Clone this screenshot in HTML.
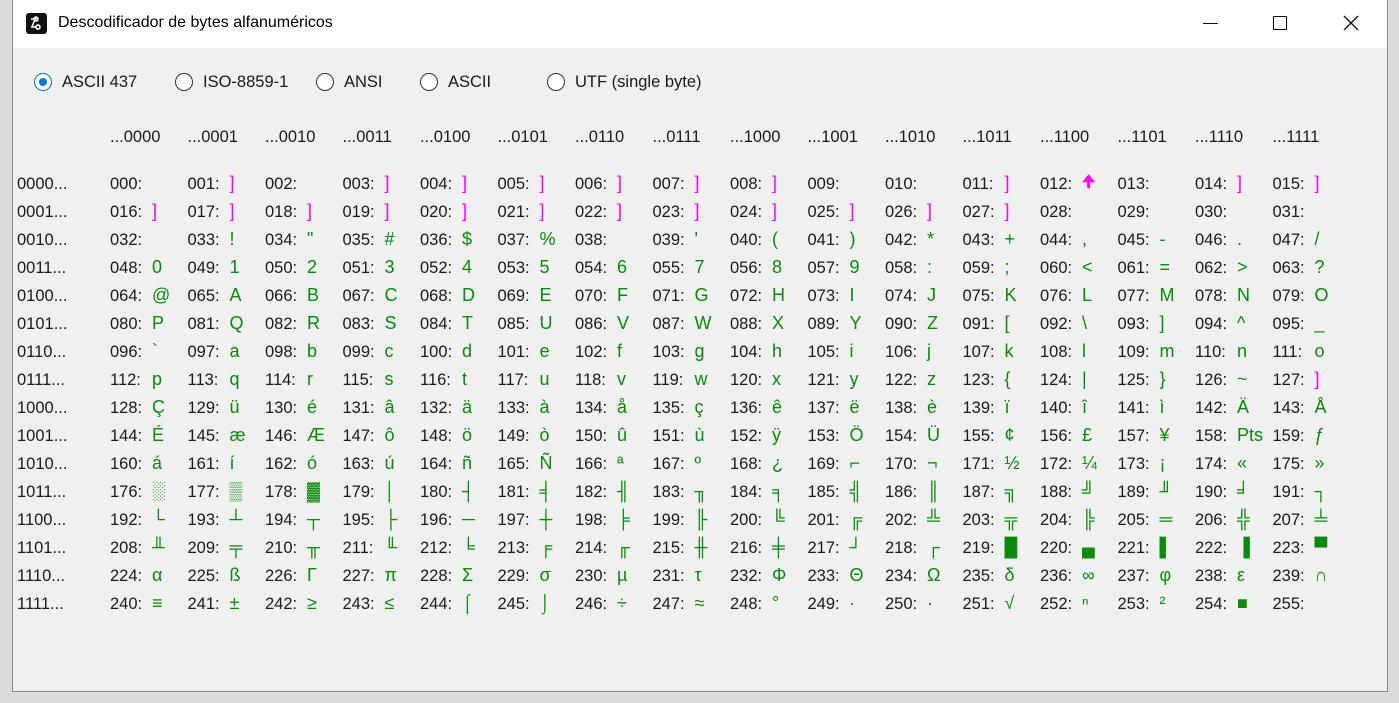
<!DOCTYPE html>
<html><head><meta charset="utf-8"><style>
*{margin:0;padding:0;box-sizing:border-box}
body{width:1399px;height:703px;background:#dcdcdc;position:relative;overflow:hidden;font-family:"Liberation Sans","DejaVu Sans",sans-serif;color:#1a1a1a}
.win{position:absolute;left:12px;top:0;width:1376px;height:692px;background:#f0f0f0;border:1px solid #8a8a8a;border-top:none}
.tb{position:absolute;left:0;top:0;width:100%;height:48px;background:#fff}
.tt{position:absolute;left:45px;top:14px;font-size:16px;color:#000}
.rad{position:absolute;top:72px;font-size:16.5px;line-height:20px}
.rad .o{position:absolute;left:0;top:1px;width:18px;height:18px;border:1.5px solid #333;border-radius:50%;background:#fff}
.rad .o.on{border-color:#0078d7}
.rad .o.on::after{content:"";position:absolute;left:3.5px;top:3.5px;width:8px;height:8px;border-radius:50%;background:#0078d7}
.rad span{position:absolute;left:28px;top:0;white-space:nowrap}
.hdr{position:absolute;top:127px;left:110px;font-size:16.5px;line-height:20px;white-space:nowrap}
.hdr span{display:inline-block;width:77.5px}
.row{position:absolute;left:5px;font-size:16.5px;line-height:20px;white-space:nowrap;height:20px}
.rl{position:absolute;left:0;top:0}
.cells{position:absolute;left:93px;top:0}
.c{display:inline-block;width:77.5px;position:relative;height:20px;vertical-align:top}
.c b{font-weight:normal}
.c i{font-style:normal;position:absolute;left:42px;top:-1px;color:#0a8a0a;font-size:18px}
.c i.m{color:#ff00ff}
</style></head><body>
<div class="win">
<div class="tb">
<svg style="position:absolute;left:13px;top:13px" width="21" height="21" viewBox="0 0 21 21"><rect x="0" y="0" width="21" height="21" rx="3" fill="#111"/><path d="M5 6h6M12 6a2 2 0 1 0 0 .1M5 14h5M14 14a2 2 0 1 0 0 .1M9 6l-3 8" stroke="#fff" stroke-width="1.6" fill="none"/></svg>
<div class="tt">Descodificador de bytes alfanuméricos</div>
<div style="position:absolute;left:1190px;top:23px;width:15px;height:1.3px;background:#111"></div>
<div style="position:absolute;left:1260px;top:16px;width:14px;height:14px;border:1.3px solid #111"></div>
<svg style="position:absolute;left:1330px;top:15px" width="16" height="16"><path d="M1 1L15 15M15 1L1 15" stroke="#111" stroke-width="1.3"/></svg>
</div>
<div class="rad" style="left:21px"><div class="o on"></div><span>ASCII 437</span></div>
<div class="rad" style="left:162px"><div class="o"></div><span>ISO-8859-1</span></div>
<div class="rad" style="left:303px"><div class="o"></div><span>ANSI</span></div>
<div class="rad" style="left:407px"><div class="o"></div><span>ASCII</span></div>
<div class="rad" style="left:534px"><div class="o"></div><span>UTF (single byte)</span></div>
</div>
<div class="hdr"><span>...0000</span><span>...0001</span><span>...0010</span><span>...0011</span><span>...0100</span><span>...0101</span><span>...0110</span><span>...0111</span><span>...1000</span><span>...1001</span><span>...1010</span><span>...1011</span><span>...1100</span><span>...1101</span><span>...1110</span><span>...1111</span></div>

<div class="row" style="left:17px;top:174px"><span class="rl">0000...</span><div class="cells"><span class="c"><b>000:</b><i></i></span><span class="c"><b>001:</b><i class="m">]</i></span><span class="c"><b>002:</b><i></i></span><span class="c"><b>003:</b><i class="m">]</i></span><span class="c"><b>004:</b><i class="m">]</i></span><span class="c"><b>005:</b><i class="m">]</i></span><span class="c"><b>006:</b><i class="m">]</i></span><span class="c"><b>007:</b><i class="m">]</i></span><span class="c"><b>008:</b><i class="m">]</i></span><span class="c"><b>009:</b><i></i></span><span class="c"><b>010:</b><i></i></span><span class="c"><b>011:</b><i class="m">]</i></span><span class="c"><b>012:</b><i class="m" style="font-weight:bold;font-size:16px">🠉</i></span><span class="c"><b>013:</b><i></i></span><span class="c"><b>014:</b><i class="m">]</i></span><span class="c"><b>015:</b><i class="m">]</i></span></div></div>

<div class="row" style="left:17px;top:202px"><span class="rl">0001...</span><div class="cells"><span class="c"><b>016:</b><i class="m">]</i></span><span class="c"><b>017:</b><i class="m">]</i></span><span class="c"><b>018:</b><i class="m">]</i></span><span class="c"><b>019:</b><i class="m">]</i></span><span class="c"><b>020:</b><i class="m">]</i></span><span class="c"><b>021:</b><i class="m">]</i></span><span class="c"><b>022:</b><i class="m">]</i></span><span class="c"><b>023:</b><i class="m">]</i></span><span class="c"><b>024:</b><i class="m">]</i></span><span class="c"><b>025:</b><i class="m">]</i></span><span class="c"><b>026:</b><i class="m">]</i></span><span class="c"><b>027:</b><i class="m">]</i></span><span class="c"><b>028:</b><i></i></span><span class="c"><b>029:</b><i></i></span><span class="c"><b>030:</b><i></i></span><span class="c"><b>031:</b><i></i></span></div></div>

<div class="row" style="left:17px;top:230px"><span class="rl">0010...</span><div class="cells"><span class="c"><b>032:</b><i></i></span><span class="c"><b>033:</b><i>!</i></span><span class="c"><b>034:</b><i>"</i></span><span class="c"><b>035:</b><i>#</i></span><span class="c"><b>036:</b><i>$</i></span><span class="c"><b>037:</b><i>%</i></span><span class="c"><b>038:</b><i></i></span><span class="c"><b>039:</b><i>'</i></span><span class="c"><b>040:</b><i>(</i></span><span class="c"><b>041:</b><i>)</i></span><span class="c"><b>042:</b><i>*</i></span><span class="c"><b>043:</b><i>+</i></span><span class="c"><b>044:</b><i>,</i></span><span class="c"><b>045:</b><i>-</i></span><span class="c"><b>046:</b><i>.</i></span><span class="c"><b>047:</b><i>/</i></span></div></div>

<div class="row" style="left:17px;top:258px"><span class="rl">0011...</span><div class="cells"><span class="c"><b>048:</b><i>0</i></span><span class="c"><b>049:</b><i>1</i></span><span class="c"><b>050:</b><i>2</i></span><span class="c"><b>051:</b><i>3</i></span><span class="c"><b>052:</b><i>4</i></span><span class="c"><b>053:</b><i>5</i></span><span class="c"><b>054:</b><i>6</i></span><span class="c"><b>055:</b><i>7</i></span><span class="c"><b>056:</b><i>8</i></span><span class="c"><b>057:</b><i>9</i></span><span class="c"><b>058:</b><i>:</i></span><span class="c"><b>059:</b><i>;</i></span><span class="c"><b>060:</b><i>&lt;</i></span><span class="c"><b>061:</b><i>=</i></span><span class="c"><b>062:</b><i>&gt;</i></span><span class="c"><b>063:</b><i>?</i></span></div></div>

<div class="row" style="left:17px;top:286px"><span class="rl">0100...</span><div class="cells"><span class="c"><b>064:</b><i>@</i></span><span class="c"><b>065:</b><i>A</i></span><span class="c"><b>066:</b><i>B</i></span><span class="c"><b>067:</b><i>C</i></span><span class="c"><b>068:</b><i>D</i></span><span class="c"><b>069:</b><i>E</i></span><span class="c"><b>070:</b><i>F</i></span><span class="c"><b>071:</b><i>G</i></span><span class="c"><b>072:</b><i>H</i></span><span class="c"><b>073:</b><i>I</i></span><span class="c"><b>074:</b><i>J</i></span><span class="c"><b>075:</b><i>K</i></span><span class="c"><b>076:</b><i>L</i></span><span class="c"><b>077:</b><i>M</i></span><span class="c"><b>078:</b><i>N</i></span><span class="c"><b>079:</b><i>O</i></span></div></div>

<div class="row" style="left:17px;top:314px"><span class="rl">0101...</span><div class="cells"><span class="c"><b>080:</b><i>P</i></span><span class="c"><b>081:</b><i>Q</i></span><span class="c"><b>082:</b><i>R</i></span><span class="c"><b>083:</b><i>S</i></span><span class="c"><b>084:</b><i>T</i></span><span class="c"><b>085:</b><i>U</i></span><span class="c"><b>086:</b><i>V</i></span><span class="c"><b>087:</b><i>W</i></span><span class="c"><b>088:</b><i>X</i></span><span class="c"><b>089:</b><i>Y</i></span><span class="c"><b>090:</b><i>Z</i></span><span class="c"><b>091:</b><i>[</i></span><span class="c"><b>092:</b><i>\</i></span><span class="c"><b>093:</b><i>]</i></span><span class="c"><b>094:</b><i>^</i></span><span class="c"><b>095:</b><i>_</i></span></div></div>

<div class="row" style="left:17px;top:342px"><span class="rl">0110...</span><div class="cells"><span class="c"><b>096:</b><i>`</i></span><span class="c"><b>097:</b><i>a</i></span><span class="c"><b>098:</b><i>b</i></span><span class="c"><b>099:</b><i>c</i></span><span class="c"><b>100:</b><i>d</i></span><span class="c"><b>101:</b><i>e</i></span><span class="c"><b>102:</b><i>f</i></span><span class="c"><b>103:</b><i>g</i></span><span class="c"><b>104:</b><i>h</i></span><span class="c"><b>105:</b><i>i</i></span><span class="c"><b>106:</b><i>j</i></span><span class="c"><b>107:</b><i>k</i></span><span class="c"><b>108:</b><i>l</i></span><span class="c"><b>109:</b><i>m</i></span><span class="c"><b>110:</b><i>n</i></span><span class="c"><b>111:</b><i>o</i></span></div></div>

<div class="row" style="left:17px;top:370px"><span class="rl">0111...</span><div class="cells"><span class="c"><b>112:</b><i>p</i></span><span class="c"><b>113:</b><i>q</i></span><span class="c"><b>114:</b><i>r</i></span><span class="c"><b>115:</b><i>s</i></span><span class="c"><b>116:</b><i>t</i></span><span class="c"><b>117:</b><i>u</i></span><span class="c"><b>118:</b><i>v</i></span><span class="c"><b>119:</b><i>w</i></span><span class="c"><b>120:</b><i>x</i></span><span class="c"><b>121:</b><i>y</i></span><span class="c"><b>122:</b><i>z</i></span><span class="c"><b>123:</b><i>{</i></span><span class="c"><b>124:</b><i>|</i></span><span class="c"><b>125:</b><i>}</i></span><span class="c"><b>126:</b><i>~</i></span><span class="c"><b>127:</b><i class="m">]</i></span></div></div>

<div class="row" style="left:17px;top:398px"><span class="rl">1000...</span><div class="cells"><span class="c"><b>128:</b><i>Ç</i></span><span class="c"><b>129:</b><i>ü</i></span><span class="c"><b>130:</b><i>é</i></span><span class="c"><b>131:</b><i>â</i></span><span class="c"><b>132:</b><i>ä</i></span><span class="c"><b>133:</b><i>à</i></span><span class="c"><b>134:</b><i>å</i></span><span class="c"><b>135:</b><i>ç</i></span><span class="c"><b>136:</b><i>ê</i></span><span class="c"><b>137:</b><i>ë</i></span><span class="c"><b>138:</b><i>è</i></span><span class="c"><b>139:</b><i>ï</i></span><span class="c"><b>140:</b><i>î</i></span><span class="c"><b>141:</b><i>ì</i></span><span class="c"><b>142:</b><i>Ä</i></span><span class="c"><b>143:</b><i>Å</i></span></div></div>

<div class="row" style="left:17px;top:426px"><span class="rl">1001...</span><div class="cells"><span class="c"><b>144:</b><i>É</i></span><span class="c"><b>145:</b><i>æ</i></span><span class="c"><b>146:</b><i>Æ</i></span><span class="c"><b>147:</b><i>ô</i></span><span class="c"><b>148:</b><i>ö</i></span><span class="c"><b>149:</b><i>ò</i></span><span class="c"><b>150:</b><i>û</i></span><span class="c"><b>151:</b><i>ù</i></span><span class="c"><b>152:</b><i>ÿ</i></span><span class="c"><b>153:</b><i>Ö</i></span><span class="c"><b>154:</b><i>Ü</i></span><span class="c"><b>155:</b><i>¢</i></span><span class="c"><b>156:</b><i>£</i></span><span class="c"><b>157:</b><i>¥</i></span><span class="c"><b>158:</b><i>Pts</i></span><span class="c"><b>159:</b><i>ƒ</i></span></div></div>

<div class="row" style="left:17px;top:454px"><span class="rl">1010...</span><div class="cells"><span class="c"><b>160:</b><i>á</i></span><span class="c"><b>161:</b><i>í</i></span><span class="c"><b>162:</b><i>ó</i></span><span class="c"><b>163:</b><i>ú</i></span><span class="c"><b>164:</b><i>ñ</i></span><span class="c"><b>165:</b><i>Ñ</i></span><span class="c"><b>166:</b><i>ª</i></span><span class="c"><b>167:</b><i>º</i></span><span class="c"><b>168:</b><i>¿</i></span><span class="c"><b>169:</b><i>⌐</i></span><span class="c"><b>170:</b><i>¬</i></span><span class="c"><b>171:</b><i>½</i></span><span class="c"><b>172:</b><i>¼</i></span><span class="c"><b>173:</b><i>¡</i></span><span class="c"><b>174:</b><i>«</i></span><span class="c"><b>175:</b><i>»</i></span></div></div>

<div class="row" style="left:17px;top:482px"><span class="rl">1011...</span><div class="cells"><span class="c"><b>176:</b><i>░</i></span><span class="c"><b>177:</b><i>▒</i></span><span class="c"><b>178:</b><i>▓</i></span><span class="c"><b>179:</b><i>│</i></span><span class="c"><b>180:</b><i>┤</i></span><span class="c"><b>181:</b><i>╡</i></span><span class="c"><b>182:</b><i>╢</i></span><span class="c"><b>183:</b><i>╖</i></span><span class="c"><b>184:</b><i>╕</i></span><span class="c"><b>185:</b><i>╣</i></span><span class="c"><b>186:</b><i>║</i></span><span class="c"><b>187:</b><i>╗</i></span><span class="c"><b>188:</b><i>╝</i></span><span class="c"><b>189:</b><i>╜</i></span><span class="c"><b>190:</b><i>╛</i></span><span class="c"><b>191:</b><i>┐</i></span></div></div>

<div class="row" style="left:17px;top:510px"><span class="rl">1100...</span><div class="cells"><span class="c"><b>192:</b><i>└</i></span><span class="c"><b>193:</b><i>┴</i></span><span class="c"><b>194:</b><i>┬</i></span><span class="c"><b>195:</b><i>├</i></span><span class="c"><b>196:</b><i>─</i></span><span class="c"><b>197:</b><i>┼</i></span><span class="c"><b>198:</b><i>╞</i></span><span class="c"><b>199:</b><i>╟</i></span><span class="c"><b>200:</b><i>╚</i></span><span class="c"><b>201:</b><i>╔</i></span><span class="c"><b>202:</b><i>╩</i></span><span class="c"><b>203:</b><i>╦</i></span><span class="c"><b>204:</b><i>╠</i></span><span class="c"><b>205:</b><i>═</i></span><span class="c"><b>206:</b><i>╬</i></span><span class="c"><b>207:</b><i>╧</i></span></div></div>

<div class="row" style="left:17px;top:538px"><span class="rl">1101...</span><div class="cells"><span class="c"><b>208:</b><i>╨</i></span><span class="c"><b>209:</b><i>╤</i></span><span class="c"><b>210:</b><i>╥</i></span><span class="c"><b>211:</b><i>╙</i></span><span class="c"><b>212:</b><i>╘</i></span><span class="c"><b>213:</b><i>╒</i></span><span class="c"><b>214:</b><i>╓</i></span><span class="c"><b>215:</b><i>╫</i></span><span class="c"><b>216:</b><i>╪</i></span><span class="c"><b>217:</b><i>┘</i></span><span class="c"><b>218:</b><i>┌</i></span><span class="c"><b>219:</b><i>█</i></span><span class="c"><b>220:</b><i>▄</i></span><span class="c"><b>221:</b><i>▌</i></span><span class="c"><b>222:</b><i>▐</i></span><span class="c"><b>223:</b><i>▀</i></span></div></div>

<div class="row" style="left:17px;top:566px"><span class="rl">1110...</span><div class="cells"><span class="c"><b>224:</b><i>α</i></span><span class="c"><b>225:</b><i>ß</i></span><span class="c"><b>226:</b><i>Γ</i></span><span class="c"><b>227:</b><i>π</i></span><span class="c"><b>228:</b><i>Σ</i></span><span class="c"><b>229:</b><i>σ</i></span><span class="c"><b>230:</b><i>µ</i></span><span class="c"><b>231:</b><i>τ</i></span><span class="c"><b>232:</b><i>Φ</i></span><span class="c"><b>233:</b><i>Θ</i></span><span class="c"><b>234:</b><i>Ω</i></span><span class="c"><b>235:</b><i>δ</i></span><span class="c"><b>236:</b><i>∞</i></span><span class="c"><b>237:</b><i>φ</i></span><span class="c"><b>238:</b><i>ε</i></span><span class="c"><b>239:</b><i>∩</i></span></div></div>

<div class="row" style="left:17px;top:594px"><span class="rl">1111...</span><div class="cells"><span class="c"><b>240:</b><i>≡</i></span><span class="c"><b>241:</b><i>±</i></span><span class="c"><b>242:</b><i>≥</i></span><span class="c"><b>243:</b><i>≤</i></span><span class="c"><b>244:</b><i>⌠</i></span><span class="c"><b>245:</b><i>⌡</i></span><span class="c"><b>246:</b><i>÷</i></span><span class="c"><b>247:</b><i>≈</i></span><span class="c"><b>248:</b><i>°</i></span><span class="c"><b>249:</b><i>∙</i></span><span class="c"><b>250:</b><i>·</i></span><span class="c"><b>251:</b><i>√</i></span><span class="c"><b>252:</b><i>ⁿ</i></span><span class="c"><b>253:</b><i>²</i></span><span class="c"><b>254:</b><i>■</i></span><span class="c"><b>255:</b><i></i></span></div></div>
</body></html>
